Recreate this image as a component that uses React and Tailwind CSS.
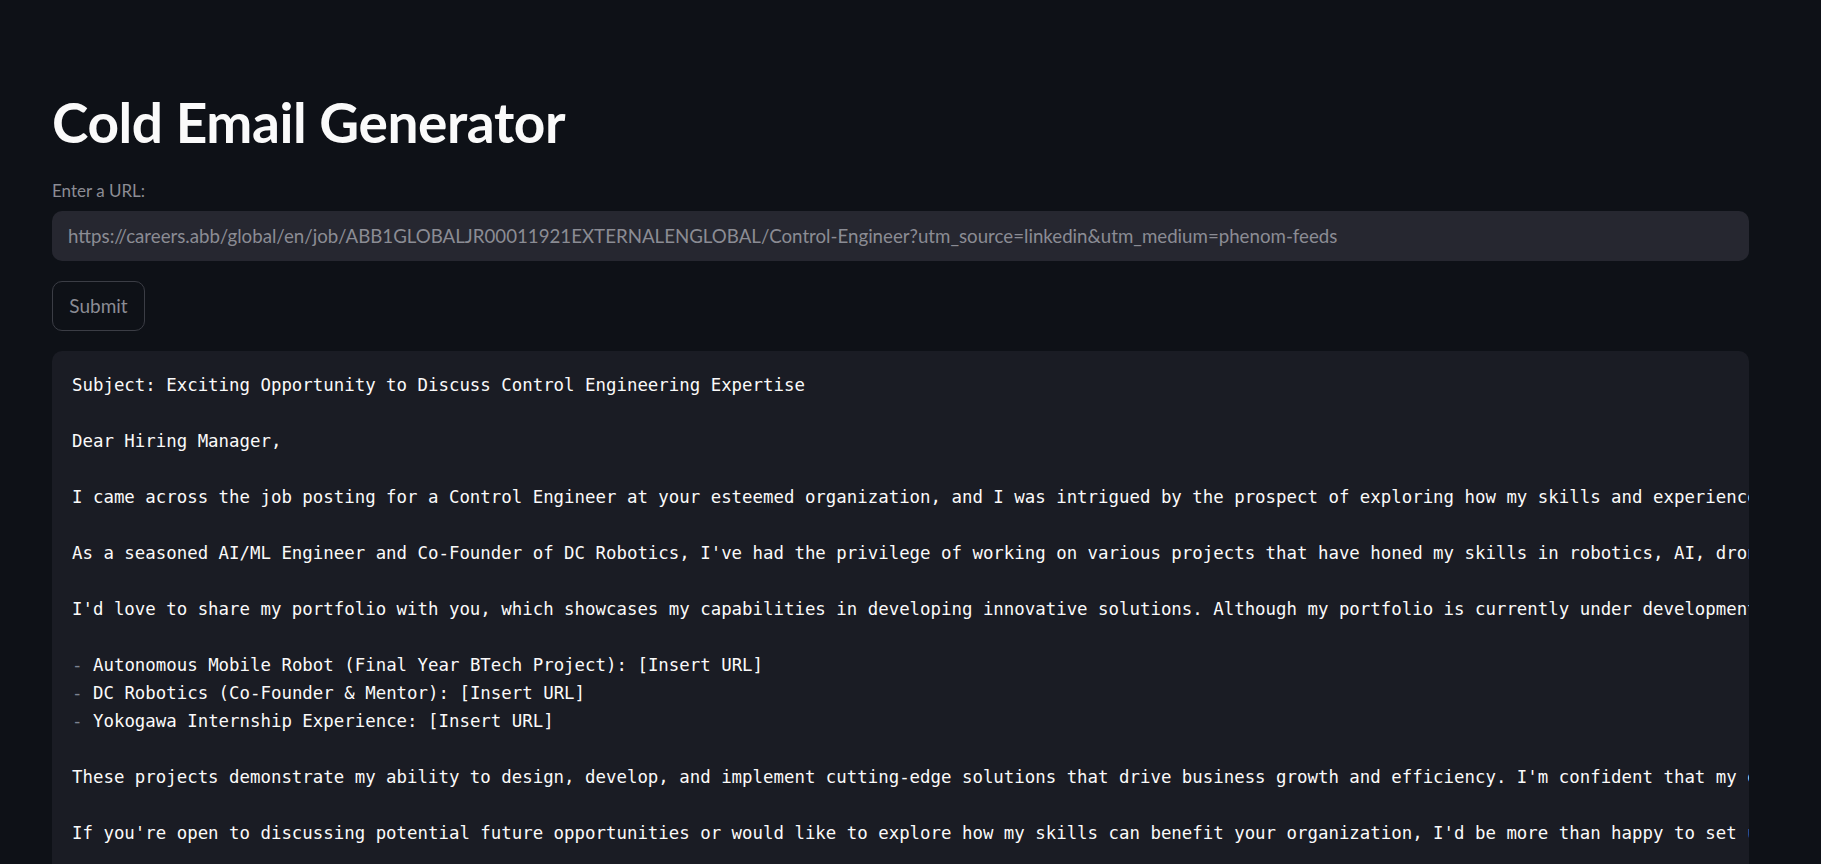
import React from 'react';

const URL_VALUE = 'https://careers.abb/global/en/job/ABB1GLOBALJR00011921EXTERNALENGLOBAL/Control-Engineer?utm_source=linkedin&utm_medium=phenom-feeds';

const EMAIL_LINES = [
  'Subject: Exciting Opportunity to Discuss Control Engineering Expertise',
  '',
  'Dear Hiring Manager,',
  '',
  'I came across the job posting for a Control Engineer at your esteemed organization, and I was intrigued by the prospect of exploring how my skills and experience align with your needs.',
  '',
  "As a seasoned AI/ML Engineer and Co-Founder of DC Robotics, I've had the privilege of working on various projects that have honed my skills in robotics, AI, drones and automation.",
  '',
  "I'd love to share my portfolio with you, which showcases my capabilities in developing innovative solutions. Although my portfolio is currently under development, here are some highlights:",
  '',
  { bullet: 'Autonomous Mobile Robot (Final Year BTech Project): [Insert URL]' },
  { bullet: 'DC Robotics (Co-Founder & Mentor): [Insert URL]' },
  { bullet: 'Yokogawa Internship Experience: [Insert URL]' },
  '',
  "These projects demonstrate my ability to design, develop, and implement cutting-edge solutions that drive business growth and efficiency. I'm confident that my expertise would be valuable to your team.",
  '',
  "If you're open to discussing potential future opportunities or would like to explore how my skills can benefit your organization, I'd be more than happy to set up a call.",
  '',
  'Best regards,',
];

const CodeLine = ({ line }) => {
  if (typeof line === 'object') {
    return (
      <div className="h-[28px]">
        <span className="text-[#7d8290]">-</span> {line.bullet}
      </div>
    );
  }
  return <div className="h-[28px]">{line || '\u00a0'}</div>;
};

export default function App() {
  return (
    <div className="min-h-screen w-full bg-[#0e1117] overflow-hidden font-['Lato','Liberation_Sans',sans-serif]">
      <div className="pl-[52px] pr-[72px] pt-[92px]">
        <h1 className="text-[55px] leading-[60px] font-bold text-[#fafafa] tracking-[-0.4px]">
          Cold Email Generator
        </h1>

        <div className="mt-[29px] text-[17px] leading-[20px] text-[#8b8c94]">Enter a URL:</div>

        <div className="mt-[10px] h-[50px] rounded-[10px] bg-[#262730] flex items-center px-[16px]">
          <span className="text-[18.7px] text-[#8b8c94] whitespace-nowrap">{URL_VALUE}</span>
        </div>

        <button className="mt-[20px] h-[50px] w-[93px] rounded-[10px] border border-[#3b3d45] text-[19px] text-[#8b8c94] flex items-center justify-center">
          Submit
        </button>

        <div className="mt-[20px] rounded-[10px] bg-[#1a1c24] pt-[20px] pl-[20px] overflow-hidden">
          <div className="whitespace-pre font-['DejaVu_Sans_Mono','Liberation_Mono',monospace] text-[17.4px] leading-[28px] text-[#fafafa]">
            {EMAIL_LINES.map((line, i) => (
              <CodeLine key={i} line={line} />
            ))}
          </div>
        </div>
      </div>
    </div>
  );
}
